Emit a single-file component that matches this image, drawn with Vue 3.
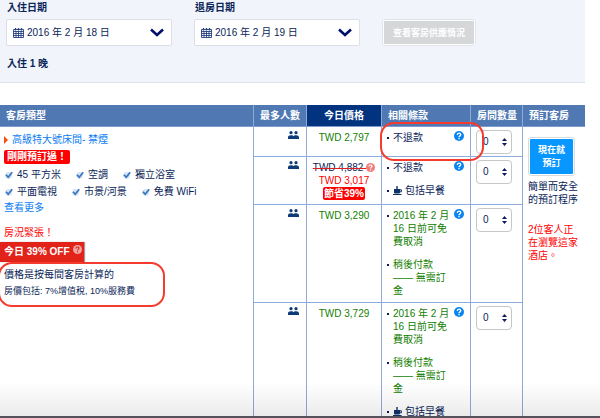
<template>
  <div class="page">
    <form class="search" @submit.prevent>
      <div class="search_row">
        <div v-for="field in dateFields" :key="field.id" class="field">
          <label :for="field.id">{{ field.label }}</label>
          <div class="date_box">
            <svg class="calendar" viewBox="0 0 11 10" width="11" height="10">
              <path d="M0.500 1.500h10v8h-10zM0.500 3.500h10M0.500 5.500h10M0.500 7.500h10M3 3v6.500M5.500 3v6.500M8 3v6.500" fill="none" stroke="#24407f" stroke-width="0.9" />
              <path d="M2.500 0v2.500M5.500 0v2.500M8.500 0v2.500" stroke="#24407f" stroke-width="1.300" />
            </svg>
            <select :id="field.id" v-model="field.value">
              <option>{{ field.value }}</option>
            </select>
            <svg class="chevron" viewBox="0 0 14 9" width="14" height="9">
              <path d="M1 1.500l6 5.500 6-5.500" fill="none" stroke="#00106b" stroke-width="2.600" />
            </svg>
          </div>
        </div>
        <button class="check_btn" type="submit">查看客房供應情況</button>
      </div>
      <div class="nights">入住 1 晚</div>
    </form>

    <table class="rooms">
      <colgroup>
        <col />
        <col class="col_max" />
        <col class="col_price" />
        <col class="col_terms" />
        <col class="col_qty" />
        <col class="col_book" />
      </colgroup>
      <thead>
        <tr>
          <th>客房類型</th>
          <th>最多人數</th>
          <th class="today">今日價格</th>
          <th>相關條款</th>
          <th id="qty_head">房間數量</th>
          <th>預訂客房</th>
        </tr>
      </thead>
      <tbody>
        <tr v-for="(offer, i) in offers" :key="i" :class="{ discount: offer.oldPrice }">
          <td v-if="i === 0" class="room" :rowspan="offers.length">
            <a class="room_name" href="#">
              <span class="triangle"></span>高級特大號床間- 禁煙
            </a>
            <div class="just_booked">剛剛預訂過！</div>
            <ul v-for="(line, n) in features" :key="n" class="features">
              <li v-for="feature in line" :key="feature">
                <svg viewBox="0 0 8 8" width="8" height="8">
                  <circle cx="3.6" cy="4.4" r="3.4" fill="#d5e3f5" />
                  <path d="M1 3.8l2.2 2.4L7.2 1.2" fill="none" stroke="#3475bd" stroke-width="1.7" />
                </svg>
                {{ feature }}
              </li>
            </ul>
            <a class="more" href="#">查看更多</a>
            <div class="scarce">房況緊張！</div>
            <div class="off">
              今日 39% OFF
              <svg viewBox="0 0 10 10" width="9" height="9">
                <circle cx="5" cy="5" r="5" fill="#f3a5a0" />
                <path :d="questionPath" fill="none" stroke="#d3271f" stroke-width="1.2" />
              </svg>
            </div>
            <div class="included">
              <p>價格是按每間客房計算的</p>
              <p class="taxes">房價包括: 7%增值稅, 10%服務費</p>
            </div>
          </td>
          <td class="max">
            <svg viewBox="0 0 11 8" width="11" height="8">
              <g fill="#0b3c78">
                <circle cx="3" cy="1.700" r="1.600" />
                <circle cx="8" cy="1.700" r="1.600" />
                <path d="M0 8V6.200C0 4.900 1 4.200 3 4.200s2.200.6 2.500 1.100c.3-.5.7-1.100 2.500-1.100s3 .7 3 2V8z" />
              </g>
            </svg>
          </td>
          <td class="price">
            <template v-if="offer.oldPrice">
              <div class="old">
                <s>{{ offer.oldPrice }}&nbsp;</s>
                <svg viewBox="0 0 10 10" width="9" height="9">
                  <circle cx="5" cy="5" r="5" fill="#f07f7c" />
                  <path :d="questionPath" fill="none" stroke="#fff" stroke-width="1.2" />
                </svg>
              </div>
              <div class="sale">{{ offer.price }}</div>
              <span class="save">節省39%</span>
            </template>
            <div v-else>{{ offer.price }}</div>
          </td>
          <td class="terms">
            <svg class="help" viewBox="0 0 10 10" width="10" height="10">
              <circle cx="5" cy="5" r="5" fill="#0a84f0" />
              <path :d="questionPath" fill="none" stroke="#fff" stroke-width="1.3" />
            </svg>
            <ul>
              <li v-for="term in offer.terms" :key="term.text" :class="{ free: term.free, meal: term.meal }">
                <svg v-if="term.meal" viewBox="0 0 9 9" width="9" height="9">
                  <path d="M1 3h6v3.200c0 .8-.5 1.300-1.300 1.300H2.300C1.500 7.500 1 7 1 6.200zM0 8h8.500v1H0zM3.300 0h1.400v3H3.300z" fill="#0d3268" />
                  <path d="M7 3.800h1.400v2H7" fill="none" stroke="#0d3268" />
                </svg>
                {{ term.text }}
              </li>
            </ul>
            <span v-if="i === 0" class="mark mark_terms"></span>
          </td>
          <td class="qty">
            <div class="qty_box">
              <select v-model="offer.count" aria-labelledby="qty_head">
                <option>0</option>
                <option>1</option>
                <option>2</option>
              </select>
              <svg viewBox="0 0 5 8" width="5" height="8">
                <path d="M0 3L2.500 0 5 3zM0 5h5L2.500 8z" fill="#0a1a5c" />
              </svg>
            </div>
          </td>
          <td v-if="i === 0" class="book" :rowspan="offers.length">
            <button class="book_btn" type="button">現在就<br />預訂</button>
            <p>簡單而安全的預訂程序</p>
            <p class="viewing">2位客人正在瀏覽這家酒店。</p>
          </td>
        </tr>
      </tbody>
    </table>
    <span class="mark mark_included"></span>
    <div class="bottom_fade"></div>
  </div>
</template>

<script setup>
import { reactive } from "vue";

const questionPath = "M3.300 3.900c0-2.300 3.400-2.300 3.400-.2 0 1.200-1.700 1.200-1.700 2.500M5 7v1.300";

const dateFields = reactive([
  { id: "checkin", label: "入住日期", value: "2016 年 2 月 18 日" },
  { id: "checkout", label: "退房日期", value: "2016 年 2 月 19 日" },
]);

const features = [
  ["45 平方米", "空調", "獨立浴室"],
  ["平面電視", "市景/河景", "免費 WiFi"],
];

const noRefund = { text: "不退款" };
const breakfast = { text: "包括早餐", meal: true };
const freeCancel = { text: "2016 年 2 月 16 日前可免費取消", free: true };
const payLater = { text: "稍後付款 —— 無需訂金", free: true };

const offers = reactive([
  { price: "TWD 2,797", count: "0", terms: [noRefund] },
  {
    price: "TWD 3,017",
    oldPrice: "TWD 4,882",
    count: "0",
    terms: [noRefund, breakfast],
  },
  { price: "TWD 3,290", count: "0", terms: [freeCancel, payLater] },
  { price: "TWD 3,729", count: "0", terms: [freeCancel, payLater, breakfast] },
]);
</script>

<style>
body {
  margin: 0;
  background: #fff;
}
</style>

<style scoped>
.page {
  height: 100vh;
  overflow: hidden;
  position: relative;
  font-family: "Liberation Sans", "Noto Sans CJK TC", sans-serif;
  font-size: 10px;
  line-height: 13px;
  color: #0a2558;
}
.page * {
  box-sizing: border-box;
}
ul,
p {
  margin: 0;
  padding: 0;
  list-style: none;
}
a {
  color: #0a7cf0;
  text-decoration: none;
}
svg {
  flex: none;
}
select,
button {
  font-family: inherit;
  margin: 0;
}

/* search bar */
.search {
  margin-right: 15px;
  padding: 1px 6px 11px;
  background: #f1f4fa;
  border-bottom: 1px solid #dbe4ec;
}
.search_row {
  display: flex;
  align-items: flex-end;
}
.field {
  flex: 0 1 166px;
  margin-right: 22px;
}
.field label {
  display: block;
  padding-left: 1px;
  margin-bottom: 4px;
  line-height: 14px;
  font-weight: bold;
}
.date_box {
  position: relative;
  display: flex;
  align-items: center;
  height: 27px;
  padding-left: 6px;
  background: #fff;
  border: 1px solid #dcdfe3;
  border-radius: 2px;
}
.date_box select {
  flex: 1;
  min-width: 0;
  height: 25px;
  padding: 0 0 0 3px;
  border: 0;
  background: none;
  appearance: none;
  font-size: 10px;
  color: #0a2558;
}
.chevron {
  position: absolute;
  right: 7px;
  pointer-events: none;
}
.check_btn {
  height: 27px;
  padding: 0 9px;
  border: 2px solid #fff;
  border-radius: 3px;
  outline: 1px solid #e1e4e9;
  outline-offset: -1px;
  background: #d6d7d9;
  color: #fff;
  font-size: 9px;
  font-weight: bold;
  white-space: nowrap;
}
.nights {
  margin-top: 11px;
  padding-left: 1px;
  line-height: 14px;
  font-weight: bold;
}

/* rooms table */
.rooms {
  width: calc(100% - 15px);
  margin-top: 22px;
  table-layout: fixed;
  border-collapse: separate;
  border-spacing: 0;
}
.col_max {
  width: 53px;
}
.col_price {
  width: 75px;
}
.col_terms {
  width: 89px;
}
.col_qty {
  width: 52px;
}
.col_book {
  width: 63px;
}
th {
  height: 22px;
  padding: 0 0 1px 6px;
  background: #5079b3;
  border-left: 1px solid #8dabd6;
  border-bottom: 1px solid #7d9ccb;
  color: #fff;
  text-align: left;
  white-space: nowrap;
}
th:first-child,
td.room {
  border-left: 0;
}
th.today {
  padding-left: 0;
  background: #02337f;
  text-align: center;
}
td {
  padding: 4px 0;
  border-left: 1px solid #8dabdc;
  border-bottom: 1px solid #8dabdc;
  vertical-align: top;
}
.discount {
  height: 48px;
}

.room {
  padding-top: 6px;
}
.room_name {
  display: flex;
  align-items: center;
  padding-left: 4px;
  line-height: 14px;
}
.triangle {
  margin-right: 4px;
  border: 4px solid transparent;
  border-left-color: #f4510b;
  border-right: 0;
}
.just_booked {
  width: fit-content;
  margin: 3px 0 2px 4px;
  padding: 0 3px;
  line-height: 14px;
  border-radius: 2px;
  background: #f00;
  color: #fff;
  font-weight: bold;
}
.features {
  display: flex;
  gap: 15px;
  padding-left: 5px;
  line-height: 17px;
}
.features li {
  display: flex;
  align-items: center;
  gap: 4px;
  white-space: nowrap;
}
.more {
  display: block;
  padding-left: 4px;
  line-height: 15px;
}
.scarce {
  margin-top: 10px;
  padding-left: 4px;
  line-height: 15px;
  color: #f00;
}
.off {
  display: flex;
  gap: 3px;
  width: fit-content;
  margin-top: 2px;
  padding: 0 2px 0 4px;
  line-height: 20px;
  background: #e2231a;
  box-shadow: 1px 0 1px #a99;
  color: #fff;
  font-weight: bold;
}
.off svg {
  margin-top: 3px;
}
.included {
  margin-top: 5px;
  padding-left: 4px;
  line-height: 16px;
}
.taxes {
  font-size: 9px;
}

.max {
  padding-right: 7px;
  text-align: right;
}
.max svg {
  display: block;
  margin-left: auto;
}
.price {
  text-align: center;
  color: #128000;
}
.old {
  display: flex;
  align-items: center;
  justify-content: center;
  color: #0a2558;
}
.old s {
  text-decoration-color: #e02020;
}
.sale {
  color: #f00;
}
.save {
  display: block;
  width: fit-content;
  margin: 0 auto;
  padding: 0 1px;
  border-radius: 2px;
  background: #f00;
  color: #fff;
  font-weight: bold;
}

.terms {
  position: relative;
  padding-left: 5px;
}
.terms ul {
  width: 64px;
}
.terms li {
  position: relative;
  padding-left: 6px;
}
.terms li + li {
  margin-top: 10px;
}
.terms li::before {
  content: "";
  position: absolute;
  left: 0;
  top: 6px;
  width: 2px;
  height: 2px;
  background: #0a1a5c;
}
.terms .free {
  color: #128000;
}
.terms .meal {
  display: flex;
  align-items: center;
  gap: 3px;
  white-space: nowrap;
}
.terms .free:last-child {
  margin-bottom: 1px;
}
.help {
  float: right;
  margin-right: 6px;
}
.qty {
  padding: 3px 0 2px 5px;
}
.qty_box {
  position: relative;
  width: 36px;
}
.qty_box select {
  display: block;
  width: 100%;
  height: 24px;
  padding: 0 0 2px 6px;
  border: 1px solid #c6c6c6;
  border-radius: 4px;
  background: #fff;
  appearance: none;
  font-size: 10px;
  color: #0a2558;
}
.qty_box svg {
  position: absolute;
  right: 5px;
  top: 8px;
  pointer-events: none;
}

.book {
  padding: 10px 5px 0;
}
.book_btn {
  display: block;
  width: 47px;
  height: 39px;
  margin-bottom: 4px;
  padding: 0;
  border: 2px solid #fff;
  border-radius: 3px;
  outline: 1px solid #d9dcdf;
  outline-offset: -1px;
  background: #0896ff;
  color: #fff;
  font-size: 9px;
  font-weight: bold;
  line-height: 13px;
}
.viewing {
  margin-top: 17px;
  color: #f00;
}

/* hand-drawn red boxes */
.mark {
  position: absolute;
  z-index: 1;
  border: 2px solid #f53a2e;
  border-radius: 14px;
  pointer-events: none;
}
.mark_terms {
  left: -2px;
  top: -5px;
  width: 104px;
  height: 39px;
}
.mark_included {
  left: -2px;
  top: 262px;
  width: 167px;
  height: 45px;
}
.bottom_fade {
  position: fixed;
  left: 0;
  right: 0;
  bottom: 0;
  height: 36px;
  border-bottom: 2px solid #55525c;
  background: linear-gradient(transparent, rgba(0, 0, 0, 0.08));
  pointer-events: none;
}
</style>
